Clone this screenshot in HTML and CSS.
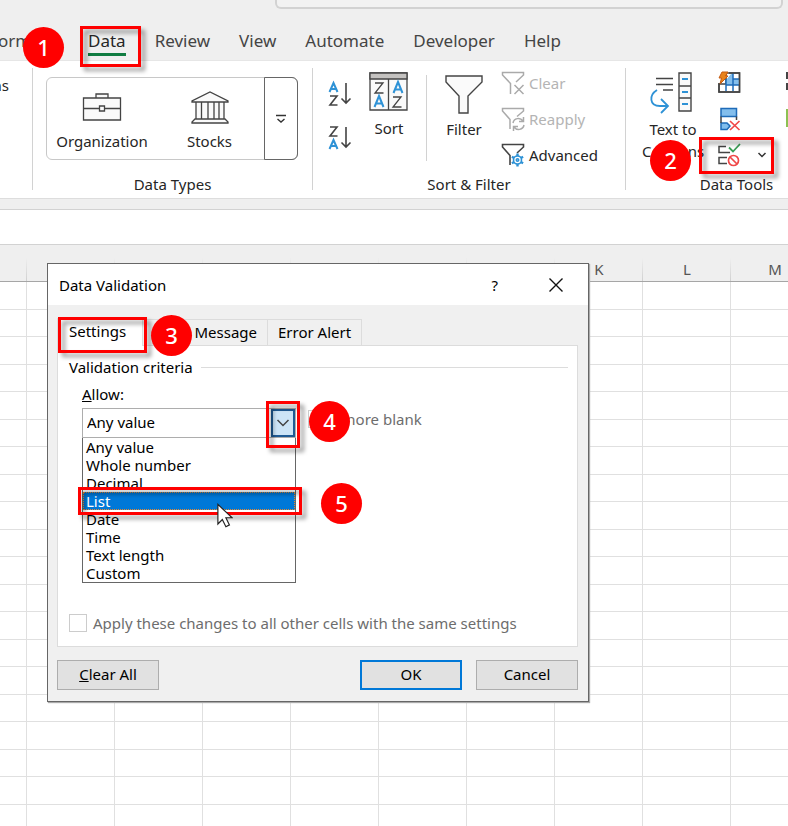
FILE: index.html
```
<!DOCTYPE html>
<html lang="en">
<head>
    <meta charset="UTF-8">
    <meta name="viewport" content="width=device-width, initial-scale=1.0">
    <title>Data Validation</title>
    <link rel="stylesheet" href="styles.css">
</head>
<body>
    <header class="titlebar">
        <div class="search"></div>
    </header>

    <nav class="tabs">
        <a href="#" class="tab first">orm<span class="badge badge-1">1</span></a>
        <a href="#" class="tab active">Data<span class="mark mark-1"></span></a>
        <a href="#" class="tab">Review</a>
        <a href="#" class="tab">View</a>
        <a href="#" class="tab">Automate</a>
        <a href="#" class="tab">Developer</a>
        <a href="#" class="tab">Help</a>
    </nav>

    <section class="ribbon">
        <div class="group group-queries">
            <div class="tools"><span>ns</span></div>
        </div>

        <div class="group group-types">
            <div class="tools">
                <div class="gallery">
                    <button class="big">
                        <svg width="40" height="36" viewBox="0 0 40 36" fill="#fafafa" stroke="#444" stroke-width="1.3">
                            <path d="M14 7V3h12v4M1.500 7h37v22h-37zM1.500 17.500h16M22.500 17.500h16M17.500 15h5v5h-5z"/>
                        </svg>
                        Organization
                    </button>
                    <button class="big">
                        <svg width="40" height="36" viewBox="0 0 40 36" fill="#fafafa" stroke="#444" stroke-width="1.3">
                            <path d="M2 11v-1L20 1l18 9v1zM6 11h28v17H6zM11.500 11v17M18 11v17M24 11v17M29 11v17M5 28h30l3 3v1H2v-1z"/>
                        </svg>
                        Stocks
                    </button>
                    <button class="more" aria-label="More data types">
                        <svg width="12" height="10" viewBox="0 0 12 10" fill="none" stroke="#333" stroke-width="1.4">
                            <path d="M1 1.500h10M2.500 5L6 8l3.500-3"/>
                        </svg>
                    </button>
                </div>
            </div>
            <div class="caption">Data Types</div>
        </div>

        <div class="group group-sort">
            <div class="tools">
                <div class="stack order">
                    <button aria-label="Sort A to Z">
                        <svg width="26" height="28" viewBox="0 0 26 28" fill="none" stroke-width="2">
                            <path stroke="#2e92d6" d="M2.500 12L6.500 3l4 9M4 9h5"/>
                            <path stroke="#444" stroke-width="1.6" d="M3 16h7l-7 9h7.500M19 3v20M14.500 18.500L19 23l4.500-4.500"/>
                        </svg>
                    </button>
                    <button aria-label="Sort Z to A">
                        <svg width="26" height="28" viewBox="0 0 26 28" fill="none" stroke-width="2">
                            <path stroke="#2e92d6" d="M2.500 25L6.500 16l4 9M4 22h5"/>
                            <path stroke="#444" stroke-width="1.6" d="M3 3h7l-7 9h7.500M19 3v20M14.500 18.500L19 23l4.500-4.500"/>
                        </svg>
                    </button>
                </div>
                <button class="big sort">
                    <svg width="40" height="40" viewBox="0 0 40 40" fill="none" stroke="#444" stroke-width="1.3">
                        <path fill="#fafafa" d="M1 1h37v37H1z"/>
                        <path fill="#c4c2c0" d="M1 1h37v6H1z"/>
                        <path d="M19.500 7v31M6 11h8l-8 10h8.500M24 25h8l-8 10h8.500"/>
                        <path stroke="#2e92d6" stroke-width="2" d="M5.500 35l4.500-11 4.500 11M7 31.500h6M24.500 21L29 10l4.500 11M26 17.500h6"/>
                    </svg>
                    Sort
                </button>
                <button class="big filter">
                    <svg width="40" height="40" viewBox="0 0 40 40" fill="#fafafa" stroke="#444" stroke-width="1.4">
                        <path d="M2 1h36v6L24 21v17h-9V21L2 7z"/>
                    </svg>
                    Filter
                </button>
                <div class="stack">
                    <button class="small" disabled>
                        <svg width="24" height="24" viewBox="0 0 24 24" fill="none" stroke="#aaa" stroke-width="1.5">
                            <path d="M9.500 23V12.500L1.500 4V1.500h21V4L15 11M13.500 14l9 9M22.500 14l-9 9"/>
                        </svg>
                        Clear
                    </button>
                    <button class="small" disabled>
                        <svg width="24" height="24" viewBox="0 0 24 24" fill="none" stroke="#aaa" stroke-width="1.5">
                            <path d="M9 22V12.500L1.500 4V1.500h21V4L16 9.500M12 16c1-5 7-6 10-2M22.500 10v4.500H18M23 18c-1 5-7 6-10 2M12.500 24v-4.500H17"/>
                        </svg>
                        Reapply
                    </button>
                    <button class="small">
                        <svg width="24" height="24" viewBox="0 0 24 24" fill="none" stroke="#444" stroke-width="1.6">
                            <path d="M9 22V12.500L1.500 4V1.500h21V4L16 10"/>
                            <g stroke="#2e92d6">
                                <circle cx="16.500" cy="17" r="4"/>
                                <circle cx="16.500" cy="17" r="1.200"/>
                                <path stroke-width="2.4" d="M16.500 10.500V13M16.500 21v2.500M10.900 13.800l2.200 1.200M19.900 19l2.200 1.200M10.900 20.200l2.200-1.200M19.900 15l2.200-1.200"/>
                            </g>
                        </svg>
                        Advanced
                    </button>
                </div>
            </div>
            <div class="caption">Sort &amp; Filter</div>
        </div>

        <div class="group group-tools">
            <div class="tools">
                <button class="big columns">
                    <svg width="48" height="42" viewBox="0 0 48 42" fill="none" stroke="#444" stroke-width="1.4">
                        <path fill="#fafafa" d="M30 1h12v38H30zM30 14h12M30 26h12"/>
                        <path d="M7 6.500h17M7 12.500h17M14 18h10"/>
                        <path stroke="#2e92d6" stroke-width="1.8" d="M33 7h6M33 20h6M33 32h6M8 18c-8 5-8 16 3 16h7M12 27l7 7-7 7"/>
                    </svg>
                    Text to<br>Columns<span class="badge badge-2">2</span>
                </button>
                <div class="stack">
                    <button class="small" aria-label="Flash Fill">
                        <svg width="24" height="24" viewBox="0 0 24 24" fill="none" stroke="#444" stroke-width="1.5">
                            <path fill="#fff" d="M9 2h13.500v19H2V13h7z"/>
                            <path fill="#83beec" stroke="none" d="M14 3h2v5h6v6H9V9z"/>
                            <path stroke="#1e6bb8" d="M9 8v12M16 2v18M9 14h13M16 8h6"/>
                            <path d="M12 2h10.500v19H2v-9"/>
                            <path fill="#e8831c" stroke="#c55a11" stroke-width="1" d="M5 1h6L8.500 5H11L3 13l1.500-6H2z"/>
                        </svg>
                    </button>
                    <button class="small" aria-label="Remove Duplicates">
                        <svg width="24" height="24" viewBox="0 0 24 24" fill="none" stroke="#1e6bb8" stroke-width="1.5">
                            <path fill="#83beec" d="M4 1.500h15.500v8H4zM4 16h6l3 3-3 3.500H4z"/>
                            <path stroke="#444" d="M4 9.500V16M19.500 9.500V13"/>
                            <path stroke="#f04848" stroke-width="1.7" d="M13 14l9.500 9M22.500 14L13 23"/>
                        </svg>
                    </button>
                    <button class="small validation" aria-label="Data Validation">
                        <svg width="24" height="24" viewBox="0 0 24 24" fill="none" stroke="#444" stroke-width="1.5">
                            <path d="M9 3.500H2v6h11M10 14.500H2v6h8"/>
                            <path stroke="#3a9e57" stroke-width="1.8" d="M12 4.500l4 4L23 1"/>
                            <circle cx="16.500" cy="17.500" r="5" stroke="#f04848" stroke-width="1.7"/>
                            <path stroke="#f04848" stroke-width="1.7" d="M13 14l7 7"/>
                        </svg>
                        <svg width="10" height="8" viewBox="0 0 10 8" fill="none" stroke="#333" stroke-width="1.5">
                            <path d="M1.500 2L5 5.500 8.500 2"/>
                        </svg>
                        <span class="mark mark-2"></span>
                    </button>
                </div>
                <div class="stack">
                    <svg width="24" height="24" viewBox="0 0 24 24" fill="none" stroke="#444" stroke-width="2">
                        <path d="M1 7V2h10v5zM1 13h10v5H1z"/>
                    </svg>
                    <svg width="24" height="24" viewBox="0 0 24 24">
                        <path fill="#8cc152" d="M0 2h22v18H0z"/>
                    </svg>
                </div>
            </div>
            <div class="caption">Data Tools</div>
        </div>
    </section>

    <div class="formula-bar"></div>

    <main class="sheet">
        <table class="grid">
            <thead>
                <tr><th class="edge"></th><th>E</th><th>F</th><th>G</th><th>H</th><th>I</th><th>J</th><th>K</th><th>L</th><th>M</th></tr>
            </thead>
            <tbody id="rows"></tbody>
        </table>
    </main>

    <div class="dialog" role="dialog" aria-labelledby="dialogTitle">
        <div class="dialog-title">
            <span id="dialogTitle">Data Validation</span>
            <button class="help" aria-label="Help">?</button>
            <button class="close" aria-label="Close">
                <svg width="16" height="16" viewBox="0 0 16 16" stroke="#111" stroke-width="1.4">
                    <path d="M1.500 1.500l13 13M14.500 1.500l-13 13"/>
                </svg>
            </button>
        </div>

        <div class="dialog-body">
            <div class="dialog-tabs">
                <button class="page-tab selected">Settings<span class="mark mark-3"></span></button>
                <button class="page-tab message">Message<span class="badge badge-3">3</span></button>
                <button class="page-tab">Error Alert</button>
            </div>

            <div class="panel">
                <div class="legend">Validation criteria</div>
                <div class="criteria">
                    <label for="allow"><u>A</u>llow:</label>
                    <div class="criteria-row">
                        <div class="combo">
                            <select id="allow">
                                <option>Any value</option>
                                <option>Whole number</option>
                                <option>Decimal</option>
                                <option>List</option>
                                <option>Date</option>
                                <option>Time</option>
                                <option>Text length</option>
                                <option>Custom</option>
                            </select>
                            <span class="arrow">
                                <svg width="14" height="10" viewBox="0 0 14 10" fill="none" stroke="#444" stroke-width="1.5">
                                    <path d="M1.500 2L7 7.500 12.500 2"/>
                                </svg>
                            </span>
                            <span class="mark mark-4"></span>
                        </div>
                        <div class="check blank">
                            <input type="checkbox" id="blank" disabled>
                            <label for="blank">Ignore blank</label>
                            <span class="badge badge-4">4</span>
                        </div>
                    </div>
                    <ul class="options" role="listbox">
                        <li role="option">Any value</li>
                        <li role="option">Whole number</li>
                        <li role="option">Decimal</li>
                        <li role="option" class="current" aria-selected="true">List<span class="mark mark-5"></span><span class="badge badge-5">5</span>
                            <svg class="cursor" width="16" height="26" viewBox="0 0 18 28" fill="#fff" stroke="#222" stroke-width="1.3">
                                <path d="M1 1v22l5-5 4 8 4-2-4-8h7z"/>
                            </svg>
                        </li>
                        <li role="option">Date</li>
                        <li role="option">Time</li>
                        <li role="option">Text length</li>
                        <li role="option">Custom</li>
                    </ul>
                </div>
                <div class="check apply">
                    <input type="checkbox" id="applyAll" disabled>
                    <label for="applyAll">Apply these changes to all other cells with the same settings</label>
                </div>
            </div>

            <div class="dialog-buttons">
                <button class="button clear"><u>C</u>lear All</button>
                <button class="button default">OK</button>
                <button class="button">Cancel</button>
            </div>
        </div>
    </div>

    <script>
        const ROWS = 20;
        const COLUMNS = 10;
        const rows = document.getElementById('rows');

        for (let i = 0; i < ROWS; i++) {
            const row = rows.insertRow();
            for (let j = 0; j < COLUMNS; j++) {
                row.insertCell();
            }
        }
    </script>
</body>
</html>
```
FILE: styles.css
```
* {
    box-sizing: border-box;
}
body {
    display: flex;
    flex-direction: column;
    position: relative;
    height: 100vh;
    margin: 0;
    overflow: hidden;
    background-color: #efefef;
    color: #262626;
    font-family: "Noto Sans", "Open Sans", sans-serif;
    font-size: 15px;
    line-height: 20px;
}
button {
    padding: 0;
    border: none;
    background: none;
    color: inherit;
    font: inherit;
}
svg {
    flex: none;
    display: block;
}

/* top of the window */
.titlebar {
    flex: none;
    height: 12px;
    padding: 0 5px 0 275px;
}
.search {
    height: 9px;
    border: 2px solid #d2d2d2;
    border-top: none;
    border-radius: 0 0 6px 6px;
    background-color: #f2f2f2;
}
.tabs {
    flex: none;
    display: flex;
    gap: 29px;
    height: 49px;
    padding-top: 16px;
    font-size: 17px;
    line-height: 26px;
    border-bottom: 1px solid #e6e6e6;
}
.tab {
    position: relative;
    height: 28px;
    color: #444;
    text-decoration: none;
}
.tab.first {
    width: 61px;
    margin-left: -2px;
}
.tab.active {
    color: #262626;
    border-bottom: 3px solid #107c41;
}

/* ribbon */
.ribbon {
    flex: none;
    display: flex;
    height: 138px;
    padding: 7px 0 8px;
    overflow: hidden;
    background-color: #fff;
    border-bottom: 1px solid #ddd;
}
.group {
    flex: none;
    display: flex;
    flex-direction: column;
    border-right: 1px solid #d2d2d2;
}
.group-queries {
    width: 33px;
}
.group-queries .tools {
    justify-content: flex-end;
    padding: 7px 23px 0 0;
}
.group-types {
    width: 280px;
}
.group-sort {
    width: 313px;
}
.group-tools {
    width: 222px;
}
.tools {
    flex: 1;
    display: flex;
}
.caption {
    height: 15px;
    line-height: 18px;
    text-align: center;
}
.gallery {
    display: flex;
    width: 252px;
    height: 83px;
    margin: 9px 0 0 13px;
    border: 1px solid #c8c8c8;
    border-radius: 6px;
}
.big {
    display: flex;
    flex-direction: column;
    align-items: center;
}
.gallery .big {
    width: 110px;
    padding-top: 13px;
    gap: 4px;
}
.gallery .big + .big {
    width: 108px;
    padding-right: 3px;
}
.more {
    display: flex;
    flex: 1;
    align-items: center;
    justify-content: center;
    margin: -1px;
    border: 1px solid #666;
    border-radius: 0 6px 6px 0;
}
.stack {
    display: flex;
    flex-direction: column;
    gap: 12px;
    padding-top: 3px;
}
.small {
    display: flex;
    align-items: center;
    gap: 4px;
    height: 24px;
}
.small:disabled {
    color: #b4b4b4;
}
.order {
    gap: 16px;
    padding: 12px 0 0 14px;
}
.sort {
    margin-left: 16px;
    padding-top: 4px;
    gap: 6px;
}
.filter {
    width: 76px;
    height: 86px;
    margin: 7px -1px 0 17px;
    gap: 4px;
    border-left: 1px solid #d2d2d2;
}
.big.filter {
    padding-right: 1px;
}
.columns {
    position: relative;
    width: 72px;
    margin-left: 11px;
    padding-top: 4px;
    gap: 4px;
    line-height: 22px;
}
.group-tools .stack {
    margin-left: 8px;
}
.group-tools .stack + .stack {
    margin-left: 19px;
}
.validation {
    position: relative;
    gap: 16px;
}

/* worksheet */
.formula-bar {
    flex: none;
    height: 36px;
    margin-top: 10px;
    background-color: #fff;
    border: 1px solid #d2d2d2;
    border-width: 1px 0;
}
.sheet {
    flex: 1;
    overflow: hidden;
}
.grid {
    width: 819px;
    table-layout: fixed;
    border-collapse: separate;
    border-spacing: 0;
}
.grid th {
    height: 37px;
    padding: 11px 0 0;
    background-image: linear-gradient(transparent 35%, #d0d0d0);
    background-size: 1px 100%;
    background-position: right;
    background-repeat: no-repeat;
    border-bottom: 1px solid #a6a6a6;
    color: #555;
    font-weight: normal;
}
.grid .edge {
    width: 27px;
}
.grid td {
    height: 28px;
    padding: 0;
    background-color: #fff;
    border-right: 1px solid #e0e0e0;
    border-bottom: 1px solid #e0e0e0;
}
.grid tr:nth-child(even) td {
    height: 27px;
}

/* dialog */
.dialog {
    position: absolute;
    top: 263px;
    left: 47px;
    width: 542px;
    background-color: #f0f0f0;
    border: 1px solid #666;
    color: #000;
    box-shadow: 1px 1px 1px #aaa;
}
.dialog-title {
    display: flex;
    align-items: center;
    height: 41px;
    padding: 0 24px 0 11px;
    background-color: #fff;
}
.help {
    margin-left: auto;
    margin-right: 50px;
}
.dialog-body {
    padding: 13px 10px 11px 9px;
}
.dialog-tabs {
    display: flex;
    align-items: flex-end;
}
.page-tab {
    position: relative;
    height: 26px;
    padding: 0 10px 2px;
    border: 1px solid #dcdcdc;
    border-left: none;
    border-bottom: none;
}
.page-tab.selected {
    width: 86px;
    height: 28px;
    margin-bottom: -1px;
    padding: 0 0 3px 11px;
    background-color: #fff;
    border-left: 1px solid #dcdcdc;
    text-align: left;
}
.page-tab.message {
    width: 125px;
    text-align: right;
}
.panel {
    height: 302px;
    padding: 11px 9px 13px 11px;
    display: flex;
    flex-direction: column;
    background-color: #fff;
    border: 1px solid #dcdcdc;
}
.legend {
    display: flex;
    align-items: center;
    gap: 8px;
}
.legend::after {
    content: "";
    flex: 1;
    border-top: 1px solid #dcdcdc;
}
.criteria {
    padding: 7px 0 0 13px;
}
.criteria > label {
    display: block;
    height: 24px;
}
.criteria-row {
    display: flex;
    gap: 12px;
}
.combo {
    position: relative;
    width: 214px;
}
.combo select {
    display: block;
    width: 100%;
    height: 30px;
    padding: 0 4px 2px;
    appearance: none;
    background-color: #fff;
    border: 1px solid #adadad;
    border-radius: 0;
    color: #000;
    font: inherit;
}
.arrow {
    position: absolute;
    top: 1px;
    right: 1px;
    bottom: 1px;
    width: 24px;
    display: flex;
    align-items: center;
    justify-content: center;
    background-color: #cce4f7;
    border: 2px solid #1f5a94;
}
.options {
    width: 214px;
    margin: -1px 0 0;
    padding: 0;
    list-style: none;
    background-color: #fff;
    border: 1px solid #666;
}
.options li {
    position: relative;
    padding-left: 3px;
    line-height: 18px;
}
.options .current {
    background-color: #0078d7;
    color: #fff;
    outline: 1px dotted #e8872c;
    outline-offset: -1px;
}
.cursor {
    position: absolute;
    top: 11px;
    left: 134px;
    z-index: 3;
}
.check {
    position: relative;
    display: flex;
    align-items: center;
    color: #6d6d6d;
}
.check input {
    flex: none;
    width: 18px;
    height: 18px;
    margin: 0 6px 0 0;
    appearance: none;
    background-color: #fff;
    border: 1px solid #ccc;
}
.blank {
    height: 22px;
}
.apply {
    margin-top: auto;
}
.dialog-buttons {
    display: flex;
    gap: 14px;
    padding-top: 13px;
}
.button {
    width: 102px;
    height: 30px;
    padding-bottom: 2px;
    background-color: #e1e1e1;
    border: 1px solid #adadad;
}
.button.clear {
    margin-right: auto;
}
.button.default {
    border: 2px solid #0078d7;
}

/* numbered steps */
.mark {
    position: absolute;
    z-index: 2;
    border: 3px solid #f00;
    filter: drop-shadow(4px 4px 2px rgba(0, 0, 0, 0.4));
}
.badge {
    position: absolute;
    z-index: 3;
    width: 41px;
    height: 41px;
    border-radius: 50%;
    background-color: #f00;
    color: #fff;
    font-size: 22px;
    font-weight: 500;
    line-height: 40px;
    text-align: center;
}
.mark-1 {
    top: -2px;
    left: -8px;
    width: 61px;
    height: 41px;
}
.mark-2 {
    top: -6px;
    left: -18px;
    width: 75px;
    height: 37px;
}
.mark-3 {
    top: -2px;
    left: 0;
    width: 89px;
    height: 36px;
}
.mark-4 {
    top: -7px;
    right: -4px;
    width: 34px;
    height: 47px;
}
.mark-5 {
    top: -5px;
    left: -5px;
    width: 224px;
    height: 28px;
}
.badge-1 {
    top: -1px;
    left: 25px;
}
.badge-2 {
    top: 72px;
    left: 13px;
}
.badge-3 {
    top: -5px;
    left: 8px;
}
.badge-4 {
    top: -7px;
    left: 1px;
}
.badge-5 {
    top: -9px;
    left: 238px;
}
```
